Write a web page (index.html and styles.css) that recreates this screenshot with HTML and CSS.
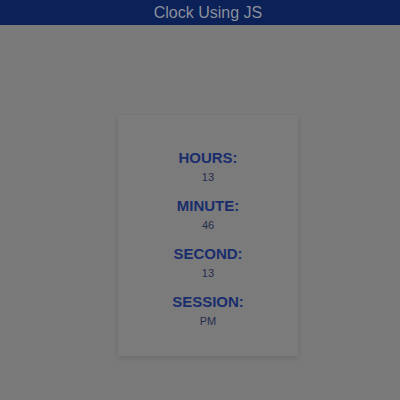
FILE: index.html
```html
<!DOCTYPE html>
<html>
<head>
<meta charset="utf-8">
<link rel="stylesheet" href="styles.css">
</head>
<body>
<header class="topbar">Clock Using JS</header>
<main class="stage">
  <section class="card">
    <div class="item"><h2 class="label">HOURS:</h2><p class="value">13</p></div>
    <div class="item"><h2 class="label">MINUTE:</h2><p class="value">46</p></div>
    <div class="item"><h2 class="label">SECOND:</h2><p class="value">13</p></div>
    <div class="item"><h2 class="label">SESSION:</h2><p class="value">PM</p></div>
  </section>
</main>
</body>
</html>
```
FILE: styles.css
```css
html, body {
  margin: 0;
  padding: 0;
  height: 100%;
  background: #7a7a7a;
  font-family: "Liberation Sans", Arial, sans-serif;
}
.topbar {
  height: 25px;
  background: #0b2158;
  color: #8c909b;
  font-size: 16px;
  line-height: 25px;
  text-align: center;
  padding-left: 16px;
}
.stage {
  display: flex;
  justify-content: center;
  padding-top: 90px;
  padding-left: 16px;
}
.card {
  width: 180px;
  box-sizing: border-box;
  padding: 34px 0 29px;
  background: #7b7b7b;
  box-shadow: 0 2px 6px rgba(0,0,0,0.12);
  display: flex;
  flex-direction: column;
  gap: 14px;
  align-items: center;
}
.item {
  text-align: center;
}
.label {
  margin: 0;
  font-size: 15px;
  font-weight: bold;
  color: #1a2d6c;
  line-height: 18px;
}
.value {
  margin: 4px 0 0;
  font-size: 11px;
  line-height: 12px;
  color: #262d4c;
}
```
